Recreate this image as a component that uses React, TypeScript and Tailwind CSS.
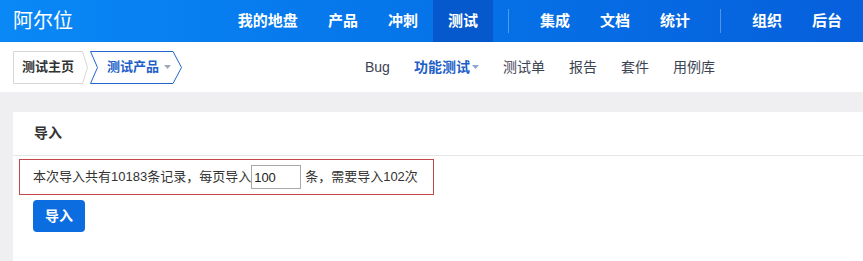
import React from 'react';

const mainNav = [
  { label: '我的地盘' },
  { label: '产品' },
  { label: '冲刺' },
  { label: '测试', active: true },
  { sep: true },
  { label: '集成' },
  { label: '文档' },
  { label: '统计' },
  { sep: true },
  { label: '组织' },
  { label: '后台' },
];

const subNav = [
  { label: 'Bug' },
  { label: '功能测试', active: true, caret: true },
  { label: '测试单' },
  { label: '报告' },
  { label: '套件' },
  { label: '用例库' },
];

const Caret = ({ className }: { className: string }) => (
  <svg width="7" height="4" viewBox="0 0 7 4" className={className}>
    <polygon points="0,0 7,0 3.5,4" fill="currentColor" />
  </svg>
);

const App: React.FC = () => {
  return (
    <div className="w-[863px] h-[261px] overflow-hidden bg-[#efeff1] font-['Liberation_Sans','Noto_Sans_CJK_SC',sans-serif]">
      {/* Top bar */}
      <header className="h-[42px] flex items-center justify-between pr-[6px] bg-gradient-to-r from-[#0a88f6] to-[#075fdc]">
        <div className="pl-[13px] text-[20px] text-white leading-none">阿尔位</div>
        <nav className="flex h-full">
          {mainNav.map((item, i) =>
            item.sep ? (
              <div key={i} className="w-[32px] flex items-center justify-center">
                <span className="w-px h-[24px] bg-white/30" />
              </div>
            ) : (
              <a
                key={i}
                className={`h-full flex items-center px-[15px] text-[15px] font-bold text-white ${
                  item.active ? 'bg-[#0658cd]' : ''
                }`}
              >
                {item.label}
              </a>
            )
          )}
        </nav>
      </header>

      {/* Sub bar */}
      <div className="h-[50px] bg-white flex items-center pl-[13px]">
        <div className="flex items-center">
          <div className="relative w-[75px] h-[33px] flex items-center pl-[9px]">
            <svg className="absolute inset-0" width="75" height="33" viewBox="0 0 75 33">
              <polygon points="0.5,0.5 69.5,0.5 74.5,16.5 69.5,32.5 0.5,32.5" fill="#fff" stroke="#d6d6d6" />
            </svg>
            <span className="relative text-[13px] font-bold text-[#333]">测试主页</span>
          </div>
          <div className="relative ml-[2px] w-[92px] h-[33px] flex items-center pl-[17px]">
            <svg className="absolute inset-0" width="92" height="33" viewBox="0 0 92 33">
              <polygon points="0.5,0.5 83,0.5 91.5,16.5 83,32.5 0.5,32.5 7.5,16.5" fill="#fff" stroke="#2166cc" />
            </svg>
            <span className="relative text-[13px] font-bold text-[#1d5fc8]">测试产品</span>
            <Caret className="relative ml-[5px] text-[#a0a8b8]" />
          </div>
        </div>
        <nav className="flex items-center ml-[171px]">
          {subNav.map((item) => (
            <a
              key={item.label}
              className={`flex items-center px-[12px] text-[14px] ${
                item.active ? 'font-bold text-[#1d5fc8]' : 'text-[#3c4353]'
              }`}
            >
              {item.label}
              {item.caret && <Caret className="ml-[2px] text-[#8fa6d0]" />}
            </a>
          ))}
        </nav>
      </div>

      {/* Content */}
      <div className="pt-[20px] pl-[13px]">
        <div className="bg-white h-[200px]">
          <div className="h-[44px] flex items-center pl-[21px] border-b border-[#e6e6e6]">
            <span className="text-[14px] font-bold text-[#333]">导入</span>
          </div>
          <div className="px-[6px] pt-[3px]">
            <div className="w-[415px] h-[36px] flex items-center pl-[13px] border border-[#c5474a] text-[13px] text-[#333]">
              <span>本次导入共有10183条记录，每页导入</span>
              <input
                readOnly
                value="100"
                className="w-[50px] h-[24px] border border-[#a8a8a8] pl-[2px] text-[13px] text-[#222] outline-none"
              />
              <span className="ml-[4px]">条，需要导入102次</span>
            </div>
            <button className="mt-[5px] ml-[14px] w-[52px] h-[32px] rounded-[4px] bg-[#0b6de0] text-white text-[14px] font-bold">
              导入
            </button>
          </div>
        </div>
      </div>
    </div>
  );
};

export default App;
